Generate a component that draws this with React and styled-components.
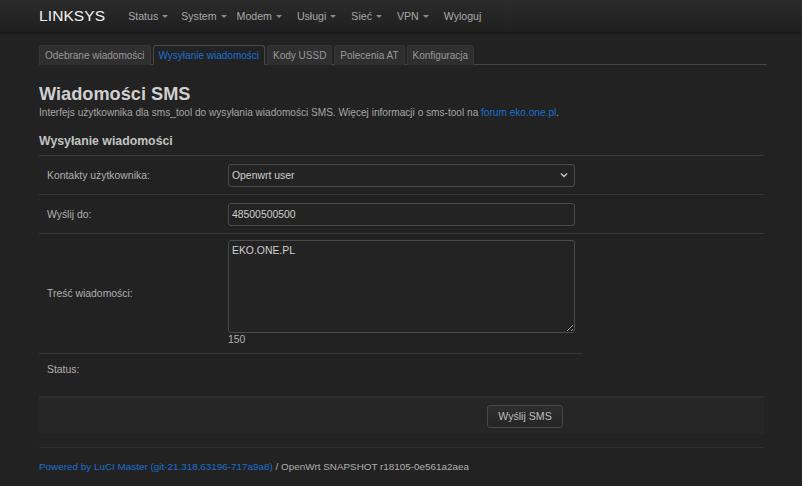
import React from "react";
import styled, { createGlobalStyle } from "styled-components";

const Global = createGlobalStyle`
  html, body { margin: 0; padding: 0; background: #222222; }
  body { font-family: "Liberation Sans", Arial, sans-serif; color: #b4b4b4; }
  * { box-sizing: border-box; }
`;

const Header = styled.header`
  height: 32px;
  background: linear-gradient(#2b2b2b, #1f1f1f);
  box-shadow: 0 1px 3px rgba(0,0,0,0.45);
  display: flex;
  align-items: center;
  padding-left: 39px;
`;

const Brand = styled.div`
  font-size: 15.5px;
  color: #f2f2f2;
  margin-right: 23px;
  letter-spacing: 0.1px;
`;

const Nav = styled.nav`
  display: flex;
  align-items: center;
`;

const NavItem = styled.span`
  font-size: 10.6px;
  color: #a8a8a8;
  margin-right: ${p => p.$gap}px;
  display: inline-flex;
  align-items: center;
`;

const Caret = styled.span`
  display: inline-block;
  width: 0;
  height: 0;
  margin-left: 4px;
  border-left: 3px solid transparent;
  border-right: 3px solid transparent;
  border-top: 3px solid #8a8a8a;
`;

const Main = styled.main`
  padding: 13px 38px 0 39px;
`;

const Tabs = styled.ul`
  list-style: none;
  margin: 0 -3px 0 0;
  padding: 0;
  display: flex;
  gap: 2px;
  border-bottom: 1px solid #454545;
  height: 20px;
`;

const Tab = styled.li`
  height: 20px;
  padding: 0 5px;
  font-size: 10px;
  line-height: 19px;
  border: 1px solid ${p => (p.$active ? "#4a4a4a" : "#363636")};
  border-bottom: ${p => (p.$active ? "1px solid #222222" : "none")};
  border-radius: 3px 3px 0 0;
  background: ${p => (p.$active ? "#222222" : "#2f2f2f")};
  color: ${p => (p.$active ? "#1a6fd0" : "#999999")};
  white-space: nowrap;
`;

const Title = styled.h2`
  margin: 18px 0 0;
  font-size: 18.2px;
  font-weight: bold;
  color: #cfcfcf;
  line-height: 22px;
`;

const Desc = styled.p`
  margin: 1px 0 0;
  font-size: 10.1px;
  color: #a5a5a5;
  line-height: 14px;
`;

const Link = styled.a`
  color: #1a6fd0;
  text-decoration: none;
`;

const Section = styled.h3`
  margin: 14px 0 0;
  font-size: 12.3px;
  font-weight: bold;
  color: #c2c2c2;
  line-height: 15px;
  padding-bottom: 6px;
  border-bottom: 1px solid #3a3a3a;
`;

const Row = styled.div`
  display: grid;
  grid-template-columns: 189px 347px;
  align-items: center;
  min-height: ${p => p.$h}px;
  border-top: ${p => (p.$first ? "none" : "1px solid #363636")};
  width: ${p => (p.$narrow ? "543px" : "auto")};
`;

const Label = styled.label`
  padding-left: 8px;
  font-size: 10.4px;
  color: #b0b0b0;
`;

const FieldBox = styled.div`
  display: flex;
  flex-direction: column;
  align-self: start;
  padding-top: 6px;
`;

const SelectBox = styled.div`
  height: 23px;
  border: 1px solid #4b4b4b;
  border-radius: 3px;
  background: #232323;
  display: flex;
  align-items: center;
  justify-content: space-between;
  padding: 0 6px 0 3px;
  font-size: 10.4px;
  color: #cfcfcf;
`;

const Input = styled.input`
  height: 23px;
  width: 100%;
  border: 1px solid #4b4b4b;
  border-radius: 3px;
  background: #232323;
  padding: 0 3px;
  font-family: inherit;
  font-size: 10.4px;
  color: #cfcfcf;
  outline: none;
`;

const TextArea = styled.textarea`
  display: block;
  height: 93px;
  width: 100%;
  border: 1px solid #4b4b4b;
  border-radius: 3px;
  background: #232323;
  padding: 3px 3px;
  font-family: inherit;
  font-size: 10.4px;
  line-height: 13px;
  color: #cfcfcf;
  outline: none;
  resize: vertical;
  color-scheme: dark;
`;

const Counter = styled.div`
  font-size: 10.4px;
  color: #b0b0b0;
  margin-top: 1px;
  line-height: 12px;
`;

const Actions = styled.div`
  margin-top: 11px;
  height: 38px;
  background: #262626;
  border-top: 2px solid #2d2d2d;
  display: flex;
  align-items: center;
  padding-left: 448px;
`;

const Button = styled.button`
  width: 76px;
  height: 23px;
  border: 1px solid #474747;
  border-radius: 3px;
  background: linear-gradient(#2e2e2e, #252525);
  color: #bdbdbd;
  font-family: inherit;
  font-size: 10.6px;
  padding: 0;
`;

const Footer = styled.footer`
  margin-top: 13px;
  border-top: 1px solid #2f2f2f;
  padding-top: 12px;
  font-size: 9.9px;
  color: #b0b0b0;
  line-height: 14px;
`;

const navItems = [
  { t: "Status", c: true, g: 13 },
  { t: "System", c: true, g: 10 },
  { t: "Modem", c: true, g: 15 },
  { t: "Usługi", c: true, g: 15 },
  { t: "Sieć", c: true, g: 15 },
  { t: "VPN", c: true, g: 15 },
  { t: "Wyloguj", c: false, g: 0 },
];

const tabs = ["Odebrane wiadomości", "Wysyłanie wiadomości", "Kody USSD", "Polecenia AT", "Konfiguracja"];

const Chevron = () => (
  <svg width="8" height="6" viewBox="0 0 8 6">
    <path d="M1 1.5 L4 4.5 L7 1.5" stroke="#c8c8c8" strokeWidth="1.4" fill="none" />
  </svg>
);

export default function App() {
  return (
    <>
      <Global />
      <Header>
        <Brand>LINKSYS</Brand>
        <Nav>
          {navItems.map(n => (
            <NavItem key={n.t} $gap={n.g}>
              {n.t}
              {n.c && <Caret />}
            </NavItem>
          ))}
        </Nav>
      </Header>
      <Main>
        <Tabs>
          {tabs.map((t, i) => (
            <Tab key={t} $active={i === 1}>{t}</Tab>
          ))}
        </Tabs>
        <Title>Wiadomości SMS</Title>
        <Desc>
          Interfejs użytkownika dla sms_tool do wysyłania wiadomości SMS. Więcej informacji o sms-tool na{" "}
          <Link href="#">forum eko.one.pl</Link>.
        </Desc>
        <Section>Wysyłanie wiadomości</Section>
        <Row $h={38} $first>
          <Label>Kontakty użytkownika:</Label>
          <SelectBox>
            <span>Openwrt user</span>
            <Chevron />
          </SelectBox>
        </Row>
        <Row $h={39}>
          <Label>Wyślij do:</Label>
          <Input defaultValue="48500500500" />
        </Row>
        <Row $h={120}>
          <Label>Treść wiadomości:</Label>
          <FieldBox>
            <TextArea defaultValue="EKO.ONE.PL" spellCheck={false} />
            <Counter>150</Counter>
          </FieldBox>
        </Row>
        <Row $h={32} $narrow>
          <Label>Status:</Label>
          <span />
        </Row>
        <Actions>
          <Button>Wyślij SMS</Button>
        </Actions>
        <Footer>
          <Link href="#">Powered by LuCI Master (git-21.318.63196-717a9a8)</Link> / OpenWrt SNAPSHOT r18105-0e561a2aea
        </Footer>
      </Main>
    </>
  );
}
